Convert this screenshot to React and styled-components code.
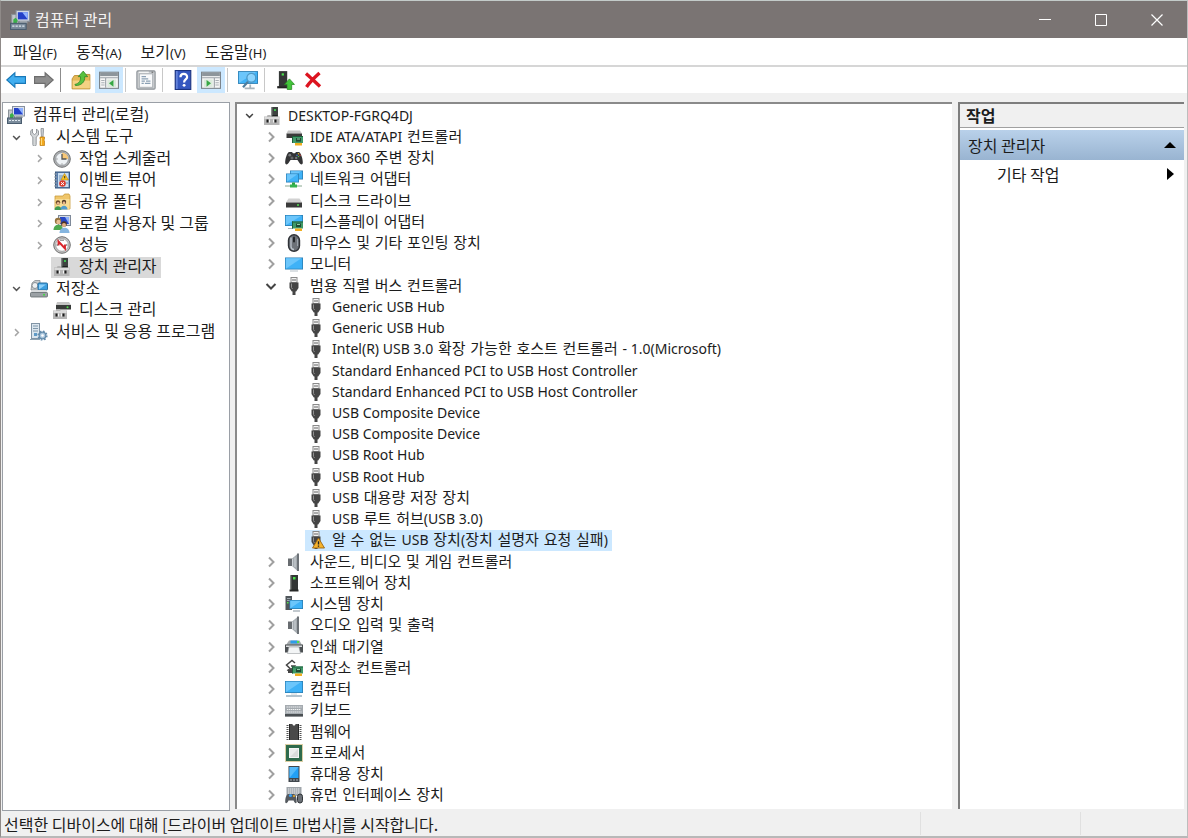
import React from 'react';
import styled, { createGlobalStyle } from 'styled-components';

const GlobalStyle = createGlobalStyle`
    * {
        box-sizing: border-box;
    }
    body {
        margin: 0;
        background: #f0f0f0;
        color: #1c1c1c;
        font-family: 'Noto Sans CJK KR', sans-serif;
        font-size: 16px;
        line-height: 20px;
    }
    button {
        border: none;
        padding: 0;
        background: none;
        color: inherit;
        font: inherit;
    }
    ul {
        margin: 0;
        padding: 0;
        list-style: none;
    }
`
const Window = styled.div`
    display: flex;
    flex-direction: column;
    min-height: 100vh;
    background: #f0f0f0;
    border: 1px solid #8f8a88;
    border-top-color: #c3cbc9;
    border-right-color: #bdbdbd;
    border-bottom: 2px solid #b8b8b8;
`
const TitleBar = styled.header`
    display: flex;
    align-items: center;
    height: 37px;
    padding-left: 9px;
    gap: 5px;
    background: #7a7473;
    color: #f4f2f2;
`
const Title = styled.h1`
    flex: 1;
    margin: 0;
    padding-bottom: 2px;
    font-size: 16px;
    font-weight: 400;
`
const CaptionButtons = styled.div`
    display: flex;
    height: 100%;
    margin-right: 2px;
`
const CaptionButton = styled.button`
    display: flex;
    align-items: center;
    justify-content: center;
    width: 56px;
    &:hover {
        background: #8d8786;
    }
`
const MenuBar = styled.nav`
    display: flex;
    align-items: center;
    gap: 19px;
    height: 29px;
    padding-left: 12px;
    background: #fff;
    border-bottom: 2px solid #d6d6d6;
`
const MenuKey = styled.span`
    font-family: 'Noto Sans', sans-serif;
    font-size: 13px;
`
const ToolBar = styled.div`
    display: flex;
    align-items: center;
    height: 26px;
    padding-left: 1px;
    background: #fff;
`
const ToolButton = styled.button`
    display: flex;
    align-items: center;
    justify-content: center;
    width: 28px;
    height: 26px;
    background: ${props => props.$active ? '#cce8ff' : 'transparent'};
`
const ToolSeparator = styled.span`
    width: 1px;
    height: 24px;
    margin: 0 6px 0 2px;
    background: ${props => props.$dark ? '#8c8c8c' : '#c8c8c8'};
`
const Body = styled.main`
    flex: 1;
    display: flex;
    padding: 9px 3px 0 1px;
`
const ConsolePane = styled.section`
    width: 228px;
    margin-right: 5px;
    background: #fff;
    border: 1px solid #9a9fa6;
`
const DevicePane = styled.section`
    flex: 1;
    display: flex;
    margin: 0 6px 2px 0;
    background: #fff;
    border-top: 2px solid #8a8a8a;
    border-left: 2px solid #8a8a8a;
`
const ActionPane = styled.aside`
    width: 226px;
    margin-bottom: 2px;
    background: #fff;
    border-top: 2px solid #7d7d7d;
    border-left: 2px solid #7d7d7d;
`
const ConsoleTree = styled.ul`
    display: grid;
    grid-auto-rows: 22px 22px 21px;
    padding-top: 1px;
    font-family: Roboto, 'Noto Sans CJK KR', sans-serif;
`
const DeviceTree = styled.ul`
    flex: 1;
    display: grid;
    grid-auto-rows: minmax(21px, 1fr);
    padding: 1px 0 3px;
    font-family: 'DejaVu Sans', 'Noto Sans CJK KR', sans-serif;
    font-size: 15px;
`
const Row = styled.li`
    display: flex;
    align-items: center;
    padding-left: ${props => props.$indent}px;
`
const Toggle = styled.button`
    display: flex;
    justify-content: center;
    width: 19px;
    margin-right: 4px;
`
const DeviceToggle = styled(Toggle)`
    width: 16px;
    margin-right: 6px;
`
const Item = styled.span`
    display: flex;
    align-items: center;
    gap: ${props => props.$gap}px;
    height: 21px;
    margin-left: -2px;
    padding: 0 4px 0 2px;
    white-space: nowrap;
    background: ${props => props.$selected || 'transparent'};
`
const Latin = styled.span`
    font-family: 'Noto Sans', sans-serif;
    font-size: 14px;
`
const ActionHeading = styled.h2`
    margin: 0 0 2px;
    padding: 1px 6px;
    height: 24px;
    background: #f0f0f0;
    border-bottom: 1px solid #a0a0a0;
    font-size: 16px;
    font-weight: 700;
`
const ActionGroup = styled.button`
    display: flex;
    align-items: center;
    justify-content: space-between;
    width: 100%;
    height: 30px;
    padding: 0 8px;
    background: linear-gradient(#b9d1ea, #99b4d1);
`
const ActionItem = styled.button`
    display: flex;
    align-items: center;
    justify-content: space-between;
    width: 100%;
    height: 28px;
    padding: 0 10px 0 37px;
`
const StatusBar = styled.footer`
    display: flex;
    height: 25px;
    padding: 1px 3px 1px 0;
`
const StatusText = styled.div`
    flex: 1;
    padding: 2px 3px;
`
const StatusCell = styled.div`
    width: ${props => props.$width}px;
    border-left: 1px solid #e0e0e0;
`

function Screen({ x, y, w, h }) {
  return (
      <>
          <rect x={x} y={y} width={w} height={h} fill="#2b7fb5" />
          <rect x={x + 0.8} y={y + 0.8} width={w - 1.6} height={h - 1.6} fill="#3fb2f7" />
          <path d={`M${x + 0.8} ${y + h - 0.8}V${y + 0.8}H${x + w - 1.6}z`} fill="#6cc6fb" />
      </>
  );
}

function Card({ x, y }) {
  return (
      <g transform={`translate(${x} ${y})`}>
          <rect x="0" y="0" width="11" height="7" fill="#3f9a68" />
          <path d="M0 .5h11M.5 0v7" stroke="#1d5d3a" />
          <rect x="4" y="2" width="5" height="3.6" fill="#1e4b35" />
          <path d="M5 3h3" stroke="#8fd0a6" />
          <rect x="3" y="7" width="7" height="2.5" fill="#f0ae20" />
      </g>
  );
}

function Drive({ y }) {
  return (
      <>
          <path d={`M3.5 ${y}h11l2.500 4h-16z`} fill="#d2d2d2" />
          <rect x="1" y={y + 4} width="16" height="5" fill="#3b3b3b" />
          <circle cx="13" cy={y + 6.4} r="1" fill="#52e052" />
      </>
  );
}

function UsbPlug() {
  return (
      <>
          <rect x="6" y="0.500" width="6" height="5" fill="#f2f2f2" stroke="#8a8a8a" />
          <path d="M8 2v2M10 2v2" stroke="#666" />
          <path d="M4.500 5.500h9V11l-2.300 3.500H6.800L4.500 11z" fill="#444" />
          <path d="M6.500 6.500v4l1 1.500" stroke="#909090" fill="none" />
          <rect x="7.500" y="14" width="3" height="4" fill="#444" />
      </>
  );
}

function Speaker() {
  return (
      <>
          <path d="M3 5.500h4v7.500H3z" fill="#686c70" />
          <path d="M7 5.500L12.500 1v17L7 13z" fill="#a6acb1" />
          <path d="M12 .5h2v17.500h-2z" fill="#6d7277" />
          <path d="M7.500 6v7M10 4.500v9.500" stroke="#cdd2d6" />
      </>
  );
}

function PcTower() {
  return (
      <>
          <path d="M1 9.500h3l.5-1.500h3L8 9.500h8.500V18H1z" fill="#b5b5b5" />
          <path d="M1.500 10h14.500v2H1.500z" fill="#dadada" />
          <rect x="8.500" y="0" width="6.500" height="9.500" fill="#3c413f" />
          <path d="M9 0v9.500" stroke="#6f7572" />
          <rect x="11" y="2" width="2" height="2" fill="#3fbf4f" />
          <path d="M9.500 8.500h5" stroke="#1f2221" />
          <path d="M4.500 12.500v3M12.500 12.500v3" stroke="#1c1c1c" strokeWidth="2" />
          <path d="M6.500 12.500v3M10.500 12.500v3" stroke="#f4f4f4" />
      </>
  );
}

const icons = {
    console: (
        <>
            <rect x="1.500" y="4" width="6" height="9" fill="#c2c7cb" stroke="#8b9298" />
            <rect x="5.500" y="0.500" width="12" height="9.500" fill="#dfe3ea" stroke="#8690a0" />
            <rect x="7" y="2" width="9" height="6.500" fill="#2340c8" />
            <path d="M11 2h5v6.500z" fill="#8fb2ff" />
            <path d="M9 10h6l1 2H8z" fill="#9fa7ae" />
            <path d="M3 8.500l2-1.500 2 2-1 3H3z" fill="#3bb04a" />
            <rect x="0.500" y="12" width="14" height="5.500" fill="#7b8c9c" stroke="#4a5d6f" />
            <path d="M2 14.500h11" stroke="#dfe8ef" strokeDasharray="2 1" />
        </>
    ),
    tools: (
        <>
            <path d="M2.500 1v4l2 1.500L6.500 5V1l2 2v4L6.200 9v7.500a1.700 1.700 0 0 1-3.400 0V9L.7 7V3z" fill="#d3d6d8" stroke="#81878b" strokeWidth=".8" />
            <path d="M11 .5h2.500V3l-.5 6h-1.500L11 3z" fill="#c9cdd1" stroke="#81878b" strokeWidth=".7" />
            <path d="M10 9h4.500v2l-.7 1 .7 1v4.500H10V13l.7-1-.7-1z" fill="#f2a81d" stroke="#bd7a10" strokeWidth=".7" />
            <path d="M11.500 10v7" stroke="#ffdc7a" />
        </>
    ),
    clock: (
        <>
            <circle cx="9" cy="9" r="8.300" fill="#aeb0b2" stroke="#6e7173" />
            <circle cx="9" cy="9" r="6.300" fill="#eef2f5" stroke="#888d92" strokeWidth=".7" />
            <path d="M9 9V2.800A6.200 6.200 0 0 1 15.200 9z" fill="#f7c777" />
            <path d="M9 4v5h4.500" fill="none" stroke="#555" strokeWidth="1.300" />
            <path d="M3.500 9h1M9 13.500v1" stroke="#777" />
        </>
    ),
    event: (
        <>
            <rect x="2.500" y="1" width="14" height="16" fill="#5a7fae" stroke="#38587f" />
            <rect x="5" y="2" width="10.500" height="14" fill="#c9def1" />
            <path d="M1 3h3M1 6h3M1 9h3M1 12h3M1 15h3" stroke="#9aa4ad" />
            <path d="M6 5h4M6 7h3M6 9h2M13 12h2" stroke="#6f8fb0" />
            <path d="M11.500 2.500L15.500 9H8z" fill="#f9c31f" stroke="#b7820f" strokeWidth=".6" />
            <path d="M11.700 5v2.300" stroke="#333" />
            <circle cx="9.500" cy="12.500" r="3.300" fill="#da3b2e" />
            <path d="M8 11.200l3 2.800M11 11.200L8 14" stroke="#fff" />
        </>
    ),
    share: (
        <>
            <path d="M2 3h8l1.500-2H16l1 2v13H2z" fill="#f0c66a" stroke="#c99c3d" strokeWidth=".8" />
            <path d="M2.500 6h14v10h-14z" fill="#f8dc93" />
            <circle cx="5" cy="9.500" r="2.200" fill="#6c4a2c" />
            <circle cx="5.200" cy="10.300" r="1.400" fill="#e7b68b" />
            <path d="M1.500 17c0-5 7-5 7 0z" fill="#3e9a50" />
            <circle cx="11" cy="9" r="2.200" fill="#513a27" />
            <circle cx="11" cy="9.900" r="1.400" fill="#e7b68b" />
            <path d="M7.500 16.500c0-5 7-5 7 0z" fill="#4f9bcc" />
        </>
    ),
    users: (
        <>
            <rect x="5.500" y="0.500" width="12" height="10" fill="#d5dae1" stroke="#7e8999" />
            <rect x="7" y="2" width="9" height="7" fill="#2747c4" />
            <path d="M12 2h4v7z" fill="#8db0f7" />
            <circle cx="5" cy="6" r="3.200" fill="#93733f" />
            <circle cx="5.500" cy="7" r="2.200" fill="#e9bd92" />
            <path d="M.5 15c0-7 9.500-7 9.500 0z" fill="#4fa94f" />
            <circle cx="11" cy="9" r="2.800" fill="#4e3524" />
            <circle cx="11" cy="10" r="2" fill="#e4af83" />
            <path d="M6.500 18c0-7 10-7 10 0z" fill="#85b5df" />
        </>
    ),
    perf: (
        <>
            <circle cx="9" cy="9" r="8.300" fill="#c5c5c5" stroke="#6f6f6f" />
            <circle cx="9" cy="9" r="6.300" fill="#fff" stroke="#8f8f8f" strokeWidth=".7" />
            <path d="M5.500 9.500V5.500l6.500 7V8.500" fill="none" stroke="#d8262c" strokeWidth="1.900" />
            <path d="M7 4.200h4M4.200 8v2M13.800 8v2" stroke="#777" />
        </>
    ),
    pc: <PcTower />,
    storage: (
        <>
            <path d="M2 3l3-2.500h5V10H1z" fill="#c9cdcf" stroke="#868d91" strokeWidth=".8" />
            <circle cx="5" cy="5.500" r="3" fill="#eef0f1" stroke="#8b9296" />
            <rect x="8" y="3" width="9.500" height="7" rx="1" fill="#3c9fe0" stroke="#2a6f9e" />
            <path d="M9 9.500v-5h7z" fill="#8fd0f8" />
            <path d="M2 10h14l1.500 3h-17z" fill="#d9dcde" />
            <rect x="0.500" y="12.500" width="17" height="4.500" rx="1" fill="#9ba1a5" stroke="#62696d" strokeWidth=".8" />
            <circle cx="14" cy="14.800" r="1" fill="#3fdb3f" />
        </>
    ),
    diskMgmt: (
        <>
            <path d="M4 1h12l2 3H3z" fill="#c4c4c4" />
            <rect x="3" y="4" width="15" height="4.500" fill="#383b39" />
            <circle cx="14.500" cy="6.200" r="1" fill="#4fe04f" />
            <path d="M0 9.500h3L3.500 8h3.500l.5 1.500H14V18H0z" fill="#b5b5b5" />
            <path d="M.5 10h13v2H.5z" fill="#dadada" />
            <path d="M3.500 12.500v3M10.500 12.500v3" stroke="#1c1c1c" strokeWidth="2" />
            <path d="M5.500 12.500v3M8.500 12.500v3" stroke="#f4f4f4" />
        </>
    ),
    services: (
        <>
            <rect x="1.500" y="0.500" width="8" height="15" fill="#dbe6ef" stroke="#8194a5" />
            <path d="M3 3h5M3 5.500h5M3 8h5" stroke="#7f97aa" />
            <rect x="4" y="10" width="3" height="3" fill="#5f9ac6" />
            <path d="M0 16.500h10" stroke="#8fa3b2" />
            <circle cx="12.500" cy="12.500" r="3.300" fill="#a9c5dc" stroke="#628aaa" strokeWidth="1.200" />
            <circle cx="12.500" cy="12.500" r="4.400" fill="none" stroke="#628aaa" strokeWidth="1.400" strokeDasharray="1.700 1.750" />
            <circle cx="12.500" cy="12.500" r="1.300" fill="#fff" />
        </>
    ),
    ide: (
        <>
            <path d="M3 2.500h12l2 3H1.500z" fill="#c6c6c6" />
            <rect x="1.500" y="5.500" width="15.500" height="4.500" fill="#3a3a3a" />
            <Card x={7} y={8} />
        </>
    ),
    gamepad: (
        <>
            <path d="M4 3h3l1 1.200h2L11 3h3c2 1 4 7 3.800 11-.3 2-2.500 2-4-1L12.500 11h-7L4.200 13c-1.500 3-3.700 3-4 1C0 10 2 4 4 3z" fill="#333436" />
            <circle cx="4.800" cy="6.200" r="1.400" fill="#77797c" />
            <circle cx="11.200" cy="9" r="1.200" fill="#77797c" />
            <path d="M5.500 9h3M7 7.500v3" stroke="#77797c" />
            <circle cx="13.500" cy="4.800" r=".8" fill="#e3b92c" />
            <circle cx="12" cy="6.200" r=".8" fill="#3c78d2" />
            <circle cx="15" cy="6.200" r=".8" fill="#d33c36" />
            <circle cx="13.500" cy="7.500" r=".8" fill="#4fb04b" />
        </>
    ),
    network: (
        <>
            <Screen x={5} y={0.500} w={13} h={9} />
            <Screen x={1} y={3.500} w={13} h={9} />
            <path d="M8.500 12.500v3" stroke="#2da145" strokeWidth="3" />
            <path d="M0 16h17" stroke="#b4c9b9" strokeWidth="1.600" />
            <path d="M5 16h7" stroke="#35b350" strokeWidth="3" />
        </>
    ),
    disk: <Drive y={6.5} />,
    display: (
        <>
            <Screen x={0} y={2} w={18} h={11} />
            <path d="M3 15.500h5" stroke="#a9b4bb" />
            <Card x={7} y={8.500} />
        </>
    ),
    mouse: (
        <>
            <rect x="3.500" y="0.800" width="11" height="16.500" rx="5.500" fill="#6c7178" stroke="#2f3237" strokeWidth="1.400" />
            <path d="M6 3.500v9c0 2 1.500 3 3 3" fill="none" stroke="#b8c0c9" strokeWidth="1.400" />
            <rect x="8" y="2.500" width="2" height="6" rx="1" fill="#23262a" />
            <path d="M12.500 5v7" stroke="#9aa2ab" />
        </>
    ),
    monitor: (
        <>
            <Screen x={0} y={2.500} w={18} h={12} />
            <path d="M5 16h8" stroke="#b7c1c8" />
        </>
    ),
    usb: <UsbPlug />,
    usbWarn: (
        <>
            <UsbPlug />
            <path d="M11.500 7l6 10H5.500z" fill="#f6b32b" stroke="#9a6411" strokeWidth=".9" strokeLinejoin="round" />
            <path d="M11.500 10.200v3.400M11.500 14.500v1.300" stroke="#222" strokeWidth="1.400" />
        </>
    ),
    speaker: <Speaker />,
    software: (
        <>
            <path d="M5.500 1h7.500v15H5.500z" fill="#333635" />
            <rect x="8" y="3" width="2.500" height="2.500" fill="#4be24b" />
            <path d="M4.500 16.500h9" stroke="#262827" strokeWidth="2" />
            <path d="M6 1.500v14" stroke="#6f7371" />
        </>
    ),
    system: (
        <>
            <rect x="0.500" y="1" width="6.500" height="14" fill="#50565b" />
            <path d="M2 3.500h3.500M2 5.500h3.500" stroke="#9da6ad" />
            <rect x="2" y="7" width="1.500" height="1.500" fill="#4be24b" />
            <Screen x={4.500} y={5} w={13.500} h={9} />
            <path d="M8 16h7" stroke="#a9b4bb" strokeWidth="1.400" />
        </>
    ),
    printer: (
        <>
            <path d="M4 2.500h10.500l2.500 4.500H1z" fill="#a4a9ac" />
            <path d="M5.500 2.500h7v3h-7z" fill="#2e9ce8" />
            <rect x="12" y="3" width="2" height="2" fill="#4be24b" />
            <path d="M0 6.500h18v8H0z" fill="#4c5053" />
            <rect x="1" y="7.500" width="16" height="1.500" fill="#d8dbdd" />
            <path d="M4 9h10l1.500 6.500h-13z" fill="#f3f5f6" stroke="#9a9fa2" strokeWidth=".6" />
        </>
    ),
    storageCtl: (
        <>
            <path d="M10 4L7 1.500 1.500 6 6 10.500 9.500 7H6" fill="#fff" stroke="#444" strokeWidth="1.500" />
            <path d="M2 11.500l3-1.500" stroke="#444" strokeWidth="1.200" />
            <rect x="3" y="10.500" width="6" height="3.500" fill="#444" />
            <Card x={7} y={7.500} />
        </>
    ),
    computer: (
        <>
            <Screen x={0} y={1} w={18} h={12} />
            <path d="M6 14h6" stroke="#c9d2d8" />
            <path d="M1 16h16" stroke="#9fb4c2" strokeWidth="1.600" />
        </>
    ),
    keyboard: (
        <>
            <rect x="0" y="4" width="18" height="11.500" fill="#a5abb0" />
            <rect x="0" y="13" width="18" height="2.500" fill="#4a4f53" />
            <path d="M1.500 6h15M2 8.500h14M1.500 11h15" stroke="#f0f2f3" strokeDasharray="1.400 .6" />
        </>
    ),
    firmware: (
        <>
            <path d="M4 1h3.500c0 2 3 2 3 0H14v16H4z" fill="#4a4a4a" />
            <path d="M2.500 2v15M15.500 2v15" stroke="#555" strokeWidth="2" strokeDasharray="1 1" />
            <path d="M4.500 1v16M13.500 1v16" stroke="#262626" />
        </>
    ),
    cpu: (
        <>
            <rect x="1" y="1" width="16" height="16" fill="#2f6b4c" />
            <rect x=".5" y=".5" width="17" height="17" fill="none" stroke="#b99f4a" strokeDasharray="1 1" />
            <rect x="4.500" y="4.500" width="9" height="9" fill="#d9dcda" stroke="#f5f5f5" />
            <path d="M5 13V5h8z" fill="#ebedec" />
        </>
    ),
    portable: (
        <>
            <rect x="3.500" y="1" width="11" height="16" fill="#40474d" />
            <rect x="4.500" y="2" width="9" height="11" fill="#22a0f5" />
            <path d="M4.500 13V2h9z" fill="#55baf9" />
            <path d="M5 15h8" stroke="#a7aeb4" strokeDasharray="2 1" />
        </>
    ),
    hid: (
        <>
            <rect x="1.500" y="1" width="15" height="9" fill="#a0a6ab" />
            <path d="M3 3h12M3 5h12M3 7h12" stroke="#eef0f1" strokeDasharray="1.400 .6" />
            <path d="M3 8h6c2 1 3 5 2.600 8.500-.6 1.500-2 .5-3-2H3.500c-1 2.500-2.600 3.500-3.200 2C0 13 1 9 3 8z" fill="#54595e" />
            <circle cx="5.500" cy="9.500" r="1.600" fill="#3c9ff0" />
            <circle cx="9" cy="10" r="1" fill="#efb22d" />
            <rect x="12.500" y="8" width="5" height="9" rx="2.500" fill="#6b7076" stroke="#2f3337" />
        </>
    ),
    back: (
        <path d="M.7 9L8 2.500V6h9.500v6H8v3.500z" fill="#41aef0" stroke="#1878b8" />
    ),
    forward: (
        <path d="M17.300 9L10 2.500V6H.5v6H10v3.500z" fill="#8e8e8e" stroke="#6d6d6d" />
    ),
    upFolder: (
        <>
            <path d="M1 8l2-3h5l2-1h7v13H1z" fill="#e6b957" stroke="#b98b30" strokeWidth=".8" />
            <path d="M1.500 9.500h15.500v7H1.500z" fill="#f5d283" />
            <path d="M3.500 13c4-1 5.500-3.500 5-7H6.500L11 1l4 5h-2.700c.5 5-3.300 8-8.300 8z" fill="#58c23f" stroke="#2d8527" strokeWidth=".7" />
        </>
    ),
    paneLeft: (
        <>
            <rect x="0.500" y="2" width="17" height="14.500" fill="#f6f6f6" stroke="#7d858c" />
            <rect x="1" y="2.500" width="16" height="3" fill="#8d959b" />
            <path d="M1 7h16M6 7v9" stroke="#9aa1a7" />
            <path d="M2 9.500h3M2 11.500h3M2 13.500h3" stroke="#a9afb4" />
            <rect x="7.500" y="8.500" width="8" height="7" fill="#dceadd" />
            <path d="M13 9v6l-4-3z" fill="#37a845" />
        </>
    ),
    paneRight: (
        <>
            <rect x="0.500" y="2" width="17" height="14.500" fill="#f6f6f6" stroke="#7d858c" />
            <rect x="1" y="2.500" width="16" height="3" fill="#8d959b" />
            <path d="M1 7h16M12 7v9" stroke="#9aa1a7" />
            <path d="M13 9.500h3M13 11.500h3M13 13.500h3" stroke="#a9afb4" />
            <rect x="2.500" y="8.500" width="8" height="7" fill="#dceadd" />
            <path d="M5 9v6l4-3z" fill="#37a845" />
        </>
    ),
    properties: (
        <>
            <rect x="0.800" y="0.800" width="16.400" height="16.400" rx="1" fill="#c9cccf" stroke="#8a9095" />
            <rect x="3" y="3.500" width="12" height="12" fill="#f9fafb" stroke="#a3a9ae" strokeWidth=".7" />
            <path d="M2.500 2h9" stroke="#fff" />
            <path d="M14 2h1.500" stroke="#666" />
            <path d="M5 6h4M5 8h6M5 10h3M9 10h4M5 12h2M8 12h5" stroke="#8aa0b4" />
        </>
    ),
    help: (
        <>
            <rect x="2" y="0.500" width="14" height="17" fill="#3558c0" stroke="#1b3480" />
            <path d="M3.500 1v16" stroke="#7d9ae8" />
            <path d="M6.700 6.500c0-4 6-4 6-.3 0 2.300-2.700 2.300-2.700 5" fill="none" stroke="#fff" strokeWidth="2" />
            <circle cx="10" cy="13.800" r="1.300" fill="#fff" />
        </>
    ),
    scan: (
        <>
            <Screen x={0} y={1} w={18} h={11.5} />
            <path d="M6 16.500h9M11 13v3" stroke="#a9b4bb" strokeWidth="1.600" />
            <circle cx="12" cy="7" r="4" fill="#9fdcff" fillOpacity=".8" stroke="#4f9bc9" strokeWidth="1.200" />
            <path d="M9 10.500L4.500 15.500" stroke="#4f7d9c" strokeWidth="2" />
        </>
    ),
    update: (
        <>
            <path d="M3.500 1h7.500v14H3.500z" fill="#343736" />
            <rect x="6" y="3" width="2" height="2" fill="#4be24b" />
            <path d="M2 15.500h9" stroke="#222" strokeWidth="2" />
            <path d="M13 8l4.500 5H15v4.500h-4V13H8.500z" fill="#43c53a" stroke="#258a20" strokeWidth=".7" />
        </>
    ),
    remove: (
        <path d="M2 2.500c3 2.500 9 8.500 14 13M15.500 2C11 6 6 11 2.500 16" fill="none" stroke="#dc1420" strokeWidth="3.400" />
    ),
};

function Icon({ name, size = 18 }) {
  return (
      <svg width={size} height={size} viewBox="0 0 18 18" aria-hidden="true">{icons[name]}</svg>
  );
}

function Chevron({ open, size, color }) {
  return (
      <svg width={size} height={size} viewBox="0 0 12 12" fill="none" stroke={color} strokeWidth="2" aria-hidden="true">
          <path d={open ? 'M1.500 4L6 8.500 10.500 4' : 'M4 1.500L8.500 6 4 10.500'} />
      </svg>
  );
}

const consoleItems = [
    { level: 0, icon: 'console', label: '컴퓨터 관리(로컬)' },
    { level: 1, icon: 'tools', label: '시스템 도구', toggle: 'open' },
    { level: 2, icon: 'clock', label: '작업 스케줄러', toggle: 'closed' },
    { level: 2, icon: 'event', label: '이벤트 뷰어', toggle: 'closed' },
    { level: 2, icon: 'share', label: '공유 폴더', toggle: 'closed' },
    { level: 2, icon: 'users', label: '로컬 사용자 및 그룹', toggle: 'closed' },
    { level: 2, icon: 'perf', label: '성능', toggle: 'closed' },
    { level: 2, icon: 'pc', label: '장치 관리자', selected: true },
    { level: 1, icon: 'storage', label: '저장소', toggle: 'open' },
    { level: 2, icon: 'diskMgmt', label: '디스크 관리' },
    { level: 1, icon: 'services', label: '서비스 및 응용 프로그램', toggle: 'closed' },
];

const deviceItems = [
    { level: 0, icon: 'pc', label: 'DESKTOP-FGRQ4DJ', toggle: 'open' },
    { level: 1, icon: 'ide', label: 'IDE ATA/ATAPI 컨트롤러', toggle: 'closed' },
    { level: 1, icon: 'gamepad', label: 'Xbox 360 주변 장치', toggle: 'closed' },
    { level: 1, icon: 'network', label: '네트워크 어댑터', toggle: 'closed' },
    { level: 1, icon: 'disk', label: '디스크 드라이브', toggle: 'closed' },
    { level: 1, icon: 'display', label: '디스플레이 어댑터', toggle: 'closed' },
    { level: 1, icon: 'mouse', label: '마우스 및 기타 포인팅 장치', toggle: 'closed' },
    { level: 1, icon: 'monitor', label: '모니터', toggle: 'closed' },
    { level: 1, icon: 'usb', label: '범용 직렬 버스 컨트롤러', toggle: 'open' },
    { level: 2, icon: 'usb', label: 'Generic USB Hub' },
    { level: 2, icon: 'usb', label: 'Generic USB Hub' },
    { level: 2, icon: 'usb', label: 'Intel(R) USB 3.0 확장 가능한 호스트 컨트롤러 - 1.0(Microsoft)' },
    { level: 2, icon: 'usb', label: 'Standard Enhanced PCI to USB Host Controller' },
    { level: 2, icon: 'usb', label: 'Standard Enhanced PCI to USB Host Controller' },
    { level: 2, icon: 'usb', label: 'USB Composite Device' },
    { level: 2, icon: 'usb', label: 'USB Composite Device' },
    { level: 2, icon: 'usb', label: 'USB Root Hub' },
    { level: 2, icon: 'usb', label: 'USB Root Hub' },
    { level: 2, icon: 'usb', label: 'USB 대용량 저장 장치' },
    { level: 2, icon: 'usb', label: 'USB 루트 허브(USB 3.0)' },
    { level: 2, icon: 'usbWarn', label: '알 수 없는 USB 장치(장치 설명자 요청 실패)', selected: true },
    { level: 1, icon: 'speaker', label: '사운드, 비디오 및 게임 컨트롤러', toggle: 'closed' },
    { level: 1, icon: 'software', label: '소프트웨어 장치', toggle: 'closed' },
    { level: 1, icon: 'system', label: '시스템 장치', toggle: 'closed' },
    { level: 1, icon: 'speaker', label: '오디오 입력 및 출력', toggle: 'closed' },
    { level: 1, icon: 'printer', label: '인쇄 대기열', toggle: 'closed' },
    { level: 1, icon: 'storageCtl', label: '저장소 컨트롤러', toggle: 'closed' },
    { level: 1, icon: 'computer', label: '컴퓨터', toggle: 'closed' },
    { level: 1, icon: 'keyboard', label: '키보드', toggle: 'closed' },
    { level: 1, icon: 'firmware', label: '펌웨어', toggle: 'closed' },
    { level: 1, icon: 'cpu', label: '프로세서', toggle: 'closed' },
    { level: 1, icon: 'portable', label: '휴대용 장치', toggle: 'closed' },
    { level: 1, icon: 'hid', label: '휴먼 인터페이스 장치', toggle: 'closed' },
];

const menus = [
    { label: '파일', accessKey: 'F' },
    { label: '동작', accessKey: 'A' },
    { label: '보기', accessKey: 'V' },
    { label: '도움말', accessKey: 'H' },
];

// latin runs are set in their own face, a little smaller than the hangul
function Label({ text }) {
  const parts = text.split(/([\x21-\x7e]+(?: [\x21-\x7e]+)*)/);
  return (
      <span>{parts.map((part, i) => i % 2 ? <Latin key={i}>{part}</Latin> : part)}</span>
  );
}

function ConsoleRow({ item }) {
  return (
      <Row $indent={item.level < 2 ? 4 : item.toggle ? 27 : 50}>
          {item.toggle &&
              <Toggle aria-label={item.label} aria-expanded={item.toggle === 'open'}>
                  <Chevron open={item.toggle === 'open'} size={9} color={item.toggle === 'open' ? '#555' : '#a6a6a6'} />
              </Toggle>}
          <Item $gap={8} $selected={item.selected && '#d9d9d9'}>
              <Icon name={item.icon} />
              <Label text={item.label} />
          </Item>
      </Row>
  );
}

function DeviceRow({ item }) {
  return (
      <Row $indent={item.level === 2 ? 70 : 4 + item.level * 22}>
          {item.toggle &&
              <DeviceToggle aria-label={item.label} aria-expanded={item.toggle === 'open'}>
                  <Chevron open={item.toggle === 'open'} size={item.level ? 12 : 9} color={item.toggle === 'open' ? '#444' : '#a0a0a0'} />
              </DeviceToggle>}
          <Item $gap={7} $selected={item.selected && '#cce8ff'}>
              <Icon name={item.icon} />
              <Label text={item.label} />
          </Item>
      </Row>
  );
}

function Tool({ name, label, active, size }) {
  return (
      <ToolButton $active={active} aria-label={label}>
          <Icon name={name} size={size || 20} />
      </ToolButton>
  );
}

export default function App() {
  return (
      <Window>
          <GlobalStyle />
          <TitleBar>
              <Icon name="console" size={20} />
              <Title>컴퓨터 관리</Title>
              <CaptionButtons>
                  <CaptionButton aria-label="최소화">
                      <svg width="12" height="12" stroke="#fff"><path d="M0 5.500h12" /></svg>
                  </CaptionButton>
                  <CaptionButton aria-label="최대화">
                      <svg width="12" height="12" stroke="#fff" fill="none"><path d="M.5 .5h11v11H.5z" /></svg>
                  </CaptionButton>
                  <CaptionButton aria-label="닫기">
                      <svg width="12" height="12" stroke="#fff" strokeWidth="1.200"><path d="M.5 .5l11 11M11.500 .5l-11 11" /></svg>
                  </CaptionButton>
              </CaptionButtons>
          </TitleBar>
          <MenuBar>
              {menus.map(menu => (
                  <button key={menu.accessKey}>{menu.label}<MenuKey>({menu.accessKey})</MenuKey></button>
              ))}
          </MenuBar>
          <ToolBar>
              <Tool name="back" label="뒤로" />
              <Tool name="forward" label="앞으로" />
              <ToolSeparator $dark />
              <Tool name="upFolder" label="위로" />
              <Tool name="paneLeft" label="콘솔 트리" active />
              <ToolSeparator />
              <Tool name="properties" label="속성" />
              <ToolSeparator />
              <Tool name="help" label="도움말" />
              <Tool name="paneRight" label="작업 창" active />
              <ToolSeparator />
              <Tool name="scan" label="하드웨어 변경 사항 검색" />
              <ToolSeparator />
              <Tool name="update" label="드라이버 업데이트" />
              <Tool name="remove" label="제거" size={18} />
          </ToolBar>
          <Body>
              <ConsolePane>
                  <ConsoleTree>
                      {consoleItems.map((item, i) => <ConsoleRow key={i} item={item} />)}
                  </ConsoleTree>
              </ConsolePane>
              <DevicePane>
                  <DeviceTree>
                      {deviceItems.map((item, i) => <DeviceRow key={i} item={item} />)}
                  </DeviceTree>
              </DevicePane>
              <ActionPane>
                  <ActionHeading>작업</ActionHeading>
                  <ActionGroup>
                      장치 관리자
                      <svg width="12" height="6"><path d="M0 6L6 0l6 6z" /></svg>
                  </ActionGroup>
                  <ActionItem>
                      기타 작업
                      <svg width="7" height="12"><path d="M0 0l7 6-7 6z" /></svg>
                  </ActionItem>
              </ActionPane>
          </Body>
          <StatusBar>
              <StatusText>선택한 디바이스에 대해 [드라이버 업데이트 마법사]를 시작합니다.</StatusText>
              <StatusCell $width={160} />
              <StatusCell $width={104} />
          </StatusBar>
      </Window>
  );
}
